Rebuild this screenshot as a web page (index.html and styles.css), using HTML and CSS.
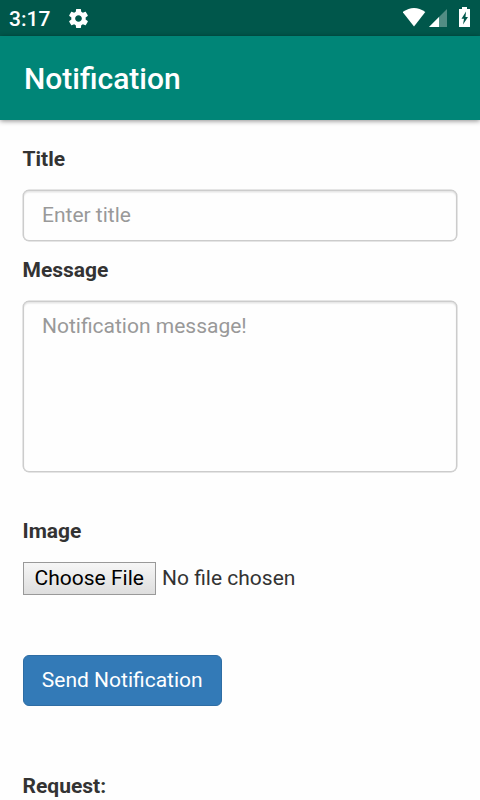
FILE: index.html
```html
<!DOCTYPE html>
<html lang="en">
<head>
<meta charset="utf-8">
<title>Notification</title>
<link rel="stylesheet" href="styles.css">
</head>
<body>
<div class="status">
  <span class="time">3:17</span>
  <svg class="gear" width="23" height="23" viewBox="0 0 24 24"><path fill="#fff" d="M19.43 12.98c.04-.32.07-.64.07-.98s-.03-.66-.07-.98l2.11-1.65c.19-.15.24-.42.12-.64l-2-3.46c-.12-.22-.39-.3-.61-.22l-2.49 1c-.52-.4-1.08-.73-1.69-.98l-.38-2.65C14.46 2.18 14.25 2 14 2h-4c-.25 0-.46.18-.49.42l-.38 2.65c-.61.25-1.17.59-1.69.98l-2.49-1c-.23-.09-.49 0-.61.22l-2 3.46c-.13.22-.07.49.12.64l2.11 1.65c-.04.32-.07.65-.07.98s.03.66.07.98l-2.11 1.65c-.19.15-.24.42-.12.64l2 3.46c.12.22.39.3.61.22l2.49-1c.52.4 1.08.73 1.69.98l.38 2.65c.03.24.24.42.49.42h4c.25 0 .46-.18.49-.42l.38-2.65c.61-.25 1.17-.59 1.69-.98l2.49 1c.23.09.49 0 .61-.22l2-3.46c.12-.22.07-.49-.12-.64l-2.11-1.65zM12 15.500c-1.930 0-3.500-1.570-3.500-3.500s1.570-3.500 3.500-3.500 3.500 1.570 3.500 3.500-1.570 3.500-3.500 3.500z"/></svg>
  <svg class="system" width="77" height="36" viewBox="0 0 77 36">
    <path fill="#fff" d="M-.3 12Q11 3.800 22.300 12L11 26.600Z"/>
    <path fill="#fff" fill-opacity=".32" d="M26 27L44 9V27Z"/>
    <path fill="#fff" d="M26 27L36 17V27Z"/>
    <path fill="#fff" fill-rule="evenodd" d="M59 7H64V9H67V27H56V9H59ZM63 11.500L58.500 18.800H61L60 24.500L65 17H62.500Z"/>
  </svg>
</div>
<header class="appbar"><h1>Notification</h1></header>
<main class="form">
  <label for="title">Title</label>
  <input class="control" id="title" type="text" placeholder="Enter title">
  <label for="message">Message</label>
  <textarea class="control message" id="message" placeholder="Notification message!"></textarea>
  <label for="image">Image</label>
  <div class="file"><button class="choose" id="image" type="button">Choose File</button><span>No file chosen</span></div>
  <button class="send" type="button">Send Notification</button>
  <strong class="request">Request:</strong>
</main>
</body>
</html>
```
FILE: styles.css
```css
* {
  box-sizing: border-box;
}

body {
  margin: 0;
  height: 800px;
  overflow: hidden;
  background: #fefefe;
  color: #333;
  font: 21px/30px Roboto, sans-serif;
}

.status {
  display: flex;
  align-items: center;
  height: 36px;
  background: #00574b;
  color: #fff;
}

.time {
  width: 42px;
  margin: 2px 0 0 9px;
  font-size: 21px;
  font-weight: 500;
}

.gear {
  margin: 1px 0 0 16px;
}

.system {
  margin-left: auto;
}

.appbar {
  height: 84px;
  padding: 0 24px;
  background: #008577;
  color: #fff;
  box-shadow: 0 1px 5px rgba(0, 0, 0, 0.45);
}

h1 {
  margin: 0;
  font-size: 30px;
  font-weight: 500;
  line-height: 85px;
}

.form {
  display: flex;
  flex-direction: column;
  align-items: flex-start;
  padding: 24px 22.5px 0;
}

label,
.request {
  font-weight: 700;
}

label {
  margin-bottom: 16px;
}

.control {
  display: block;
  width: calc(100% - 1px);
  height: 51px;
  margin: 0 0 14px 0.5px;
  padding: 8px 18px 10px;
  border: 1px solid #ccc;
  border-radius: 6px;
  background: #fefefe;
  box-shadow: 0 0 0 0.5px #ccc, inset 0 1.5px 1.5px rgba(0, 0, 0, 0.1);
  color: #555;
  font: inherit;
  resize: none;
}

.control::placeholder {
  color: #999;
  opacity: 1;
}

.message {
  height: 171px;
  margin-bottom: 44px;
  padding-top: 9px;
}

.file {
  display: flex;
  align-items: center;
  height: 33px;
  margin-bottom: 60px;
}

.file span {
  margin-bottom: 2px;
}

.choose {
  width: 133px;
  height: 33px;
  margin-right: 6.5px;
  padding: 0 0 1px 0.5px;
  border: 1px solid #999;
  border-radius: 0;
  background: linear-gradient(#f6f6f6, #dedede);
  color: #000;
  font: inherit;
  line-height: 30px;
}

.send {
  width: 199.5px;
  height: 51px;
  margin-bottom: 65px;
  padding: 0 0 2px;
  border: 1px solid #2e6da4;
  border-radius: 6px;
  background: #337ab7;
  color: #fff;
  font: inherit;
}
```
